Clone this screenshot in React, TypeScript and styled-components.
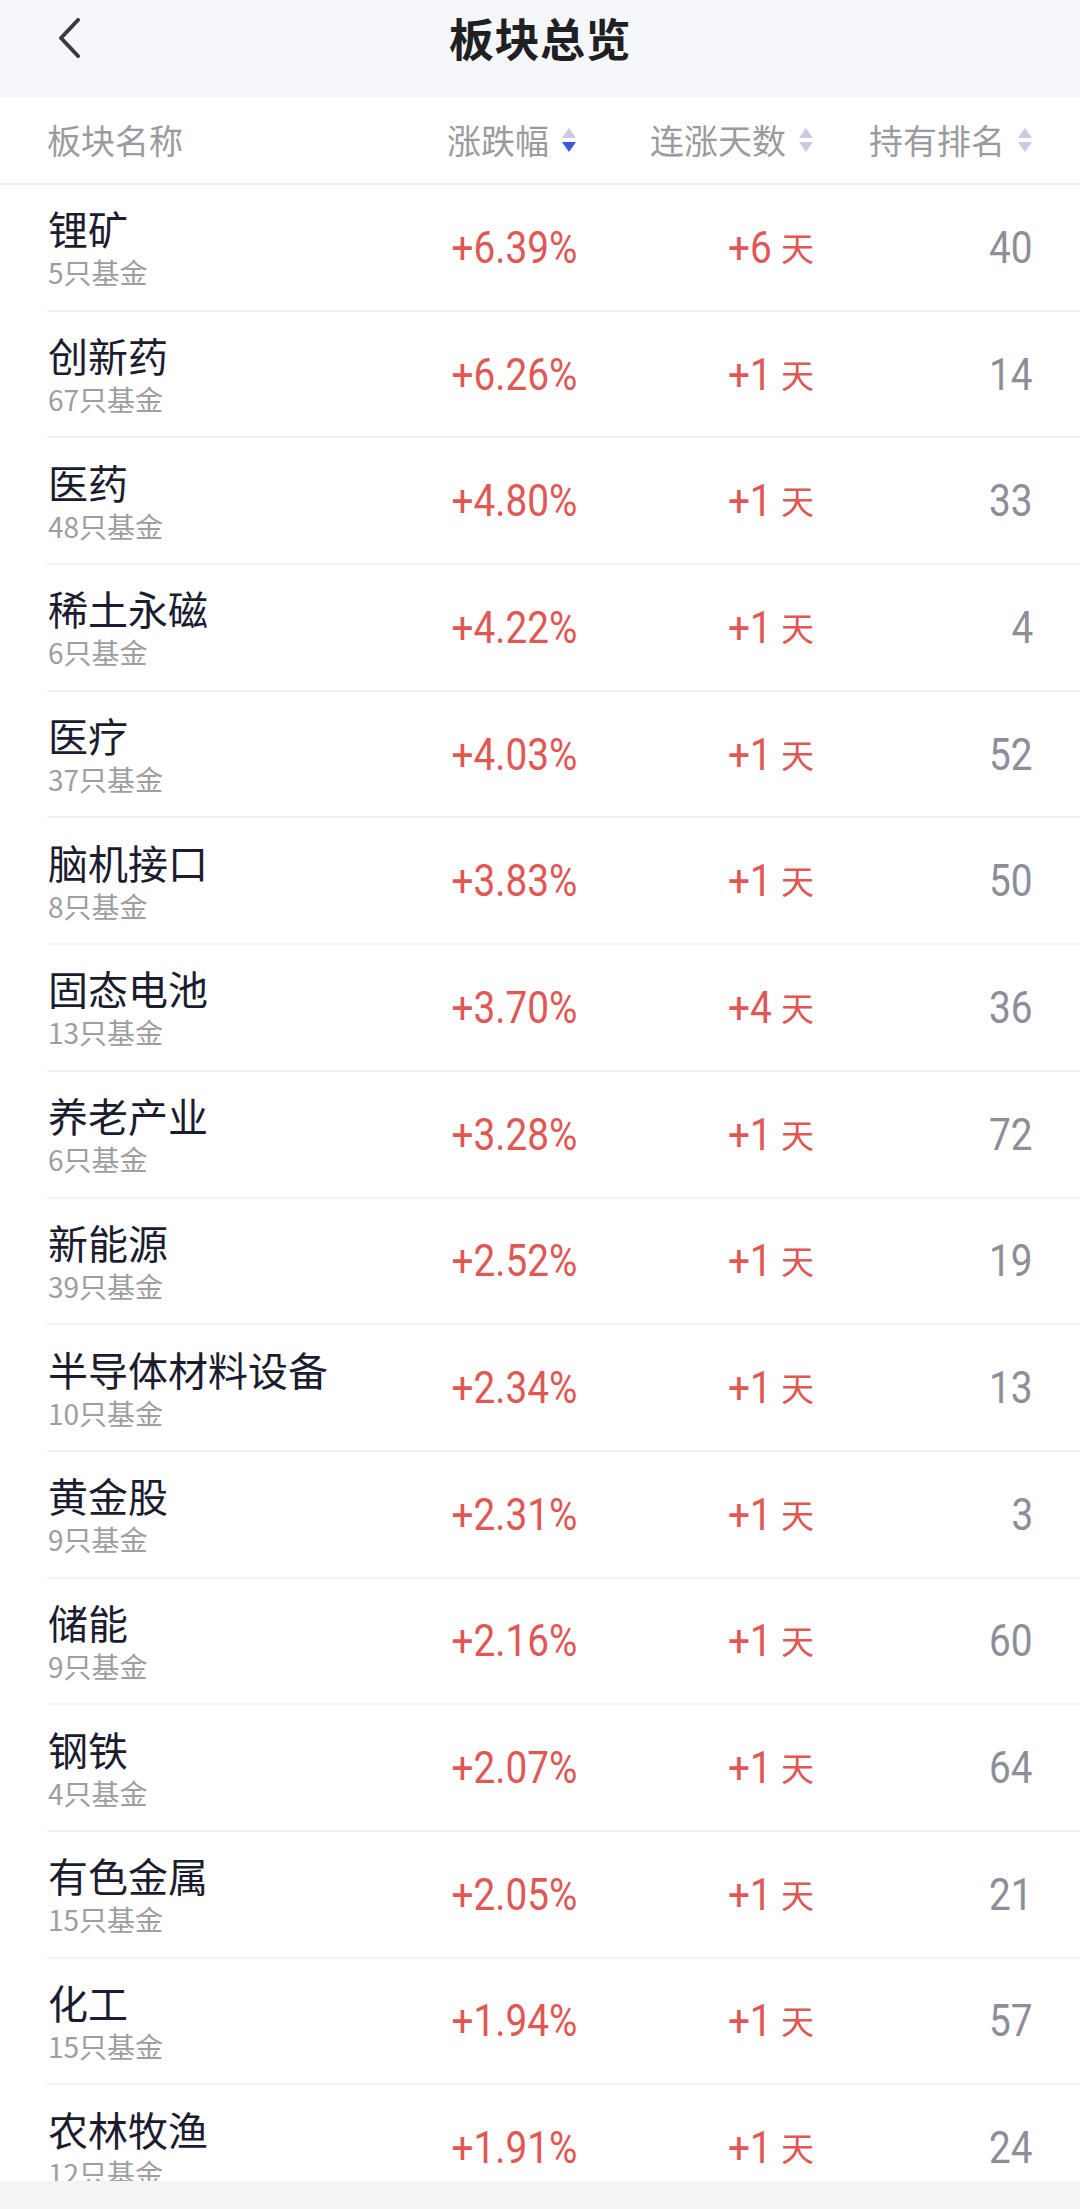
import styled, { createGlobalStyle, css } from 'styled-components';

const GlobalStyle = createGlobalStyle`
  html, body {
    margin: 0;
    padding: 0;
    background: #ffffff;
  }
  body {
    font-family: 'Noto Sans CJK SC', 'Noto Sans', sans-serif;
    -webkit-font-smoothing: antialiased;
  }
  * {
    box-sizing: border-box;
  }
`;

type Sector = {
  name: string;
  funds: number;
  change: string;
  days: number;
  rank: number;
};

const sectors: Sector[] = [
  { name: '锂矿', funds: 5, change: '+6.39%', days: 6, rank: 40 },
  { name: '创新药', funds: 67, change: '+6.26%', days: 1, rank: 14 },
  { name: '医药', funds: 48, change: '+4.80%', days: 1, rank: 33 },
  { name: '稀土永磁', funds: 6, change: '+4.22%', days: 1, rank: 4 },
  { name: '医疗', funds: 37, change: '+4.03%', days: 1, rank: 52 },
  { name: '脑机接口', funds: 8, change: '+3.83%', days: 1, rank: 50 },
  { name: '固态电池', funds: 13, change: '+3.70%', days: 4, rank: 36 },
  { name: '养老产业', funds: 6, change: '+3.28%', days: 1, rank: 72 },
  { name: '新能源', funds: 39, change: '+2.52%', days: 1, rank: 19 },
  { name: '半导体材料设备', funds: 10, change: '+2.34%', days: 1, rank: 13 },
  { name: '黄金股', funds: 9, change: '+2.31%', days: 1, rank: 3 },
  { name: '储能', funds: 9, change: '+2.16%', days: 1, rank: 60 },
  { name: '钢铁', funds: 4, change: '+2.07%', days: 1, rank: 64 },
  { name: '有色金属', funds: 15, change: '+2.05%', days: 1, rank: 21 },
  { name: '化工', funds: 15, change: '+1.94%', days: 1, rank: 57 },
  { name: '农林牧渔', funds: 12, change: '+1.91%', days: 1, rank: 24 },
];

const columns = css`
  display: grid;
  grid-template-columns: 1fr 200px 237px 219px;
  align-items: center;
`;

const Page = styled.div`
  width: 1080px;
  height: 2209px;
  display: flex;
  flex-direction: column;
  overflow: hidden;
  background: #ffffff;
`;

const NavBar = styled.header`
  height: 97px;
  flex: none;
  padding-bottom: 22px;
  background: #f6f7fb;
  display: grid;
  grid-template-columns: 160px 1fr 160px;
  align-items: center;
`;

const BackButton = styled.button`
  width: 60px;
  height: 60px;
  margin-left: 40px;
  padding: 0;
  border: none;
  background: transparent;
  display: flex;
  align-items: center;
  justify-content: center;
  color: #3a3a40;
`;

const Title = styled.h1`
  margin: 0;
  text-align: center;
  font-size: 45px;
  font-weight: 600;
  line-height: 1;
  color: #1f1f24;
  letter-spacing: 0.5px;
`;

const ColumnHeader = styled.div`
  ${columns};
  flex: none;
  height: 88px;
  padding: 0 47px 0 47px;
  border-bottom: 2px solid #efeff2;
`;

const HeadCell = styled.div<{ $align?: 'left' | 'right' }>`
  display: flex;
  align-items: center;
  justify-content: ${({ $align }) => ($align === 'left' ? 'flex-start' : 'flex-end')};
  gap: 12px;
  font-size: 34px;
  line-height: 1;
  color: #9b9b9f;
  white-space: nowrap;
`;

const List = styled.div`
  flex: 1;
  overflow: hidden;
  padding-left: 47px;
`;

const Row = styled.div`
  ${columns};
  height: 126.7px;
  padding-right: 47px;
  border-bottom: 2px solid #f2f2f4;
`;

const NameBlock = styled.div`
  display: flex;
  flex-direction: column;
  justify-content: center;
  padding-left: 1px;
`;

const Name = styled.div`
  font-size: 40px;
  line-height: 46px;
  color: #1b1c30;
  white-space: nowrap;
`;

const FundCount = styled.div`
  margin-top: 4px;
  font-size: 28px;
  line-height: 34px;
  color: #9d9da2;
`;

const NumCell = styled.div`
  display: flex;
  align-items: center;
  justify-content: flex-end;
`;

const Figure = styled.span<{ $tone: 'up' | 'muted' }>`
  display: inline-block;
  font-family: Roboto, 'Liberation Sans', sans-serif;
  font-size: 45px;
  font-weight: 400;
  line-height: 1;
  color: ${({ $tone }) => ($tone === 'up' ? '#e05753' : '#8c8e9a')};
  transform: scaleX(0.86);
  transform-origin: right center;
  margin-left: -12px;
`;

const Unit = styled.span`
  font-size: 33px;
  line-height: 1;
  color: #e05753;
  margin-left: 9px;
`;

const BottomBar = styled.div`
  height: 28px;
  flex: none;
  background: #f4f4f5;
`;

function ChevronLeft() {
  return (
    <svg width="26" height="40" viewBox="0 0 26 40" fill="none">
      <path d="M21 2 L4 20 L21 38" stroke="currentColor" strokeWidth="4" strokeLinecap="round" strokeLinejoin="round" />
    </svg>
  );
}

function SortIcon({ active }: { active?: 'up' | 'down' }) {
  const idle = '#c9cbe2';
  const on = '#3b59d8';
  return (
    <svg width="16" height="32" viewBox="0 0 16 32">
      <path d="M1 14 L8 4 L15 14 Z" fill={active === 'up' ? on : idle} />
      <path d="M1 18 L15 18 L8 28 Z" fill={active === 'down' ? on : idle} />
    </svg>
  );
}

export default function App() {
  return (
    <>
      <GlobalStyle />
      <Page>
        <NavBar>
          <BackButton aria-label="返回">
            <ChevronLeft />
          </BackButton>
          <Title>板块总览</Title>
          <span />
        </NavBar>

        <ColumnHeader>
          <HeadCell $align="left">板块名称</HeadCell>
          <HeadCell>
            涨跌幅
            <SortIcon active="down" />
          </HeadCell>
          <HeadCell>
            连涨天数
            <SortIcon />
          </HeadCell>
          <HeadCell>
            持有排名
            <SortIcon />
          </HeadCell>
        </ColumnHeader>

        <List>
          {sectors.map((s) => (
            <Row key={s.name}>
              <NameBlock>
                <Name>{s.name}</Name>
                <FundCount>{s.funds}只基金</FundCount>
              </NameBlock>
              <NumCell>
                <Figure $tone="up">{s.change}</Figure>
              </NumCell>
              <NumCell>
                <Figure $tone="up">+{s.days}</Figure>
                <Unit>天</Unit>
              </NumCell>
              <NumCell>
                <Figure $tone="muted">{s.rank}</Figure>
              </NumCell>
            </Row>
          ))}
        </List>

        <BottomBar />
      </Page>
    </>
  );
}
